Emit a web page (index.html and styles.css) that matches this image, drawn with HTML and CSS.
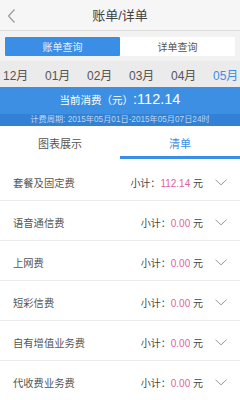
FILE: index.html
```html
<!DOCTYPE html>
<html lang="zh">
<head>
<meta charset="utf-8">
<link rel="stylesheet" href="styles.css">
</head>
<body>
<div class="app">
  <header class="topbar">
    <svg class="back" width="9" height="14" viewBox="0 0 9 14"><polyline points="7.5,0.5 1.5,7 7.5,13.5" fill="none" stroke="#9a9a9a" stroke-width="1.2"/></svg>
    <div class="title">账单/详单</div>
  </header>
  <div class="seg-wrap">
    <div class="seg">
      <div class="seg-item active">账单查询</div>
      <div class="seg-item">详单查询</div>
    </div>
  </div>
  <div class="months">
    <span>12月</span><span>01月</span><span>02月</span><span>03月</span><span>04月</span><span class="cur">05月</span>
  </div>
  <div class="total"><span class="total-label">当前消费（元）</span><span class="total-num">:112.14</span></div>
  <div class="period">计费周期: 2015年05月01日-2015年05月07日24时</div>
  <div class="tabs">
    <div class="tab">图表展示</div>
    <div class="tab active">清单</div>
  </div>
  <div class="list">
    <div class="row"><span class="label">套餐及固定费</span><span class="sub">小计：<em>112.14</em> 元</span><svg class="chev" width="12" height="7" viewBox="0 0 12 7"><polyline points="0.5,0.8 6,5.8 11.5,0.8" fill="none" stroke="#9a9a9a" stroke-width="1"/></svg></div>
    <div class="row"><span class="label">语音通信费</span><span class="sub">小计：<em>0.00</em> 元</span><svg class="chev" width="12" height="7" viewBox="0 0 12 7"><polyline points="0.5,0.8 6,5.8 11.5,0.8" fill="none" stroke="#9a9a9a" stroke-width="1"/></svg></div>
    <div class="row"><span class="label">上网费</span><span class="sub">小计：<em>0.00</em> 元</span><svg class="chev" width="12" height="7" viewBox="0 0 12 7"><polyline points="0.5,0.8 6,5.8 11.5,0.8" fill="none" stroke="#9a9a9a" stroke-width="1"/></svg></div>
    <div class="row"><span class="label">短彩信费</span><span class="sub">小计：<em>0.00</em> 元</span><svg class="chev" width="12" height="7" viewBox="0 0 12 7"><polyline points="0.5,0.8 6,5.8 11.5,0.8" fill="none" stroke="#9a9a9a" stroke-width="1"/></svg></div>
    <div class="row"><span class="label">自有增值业务费</span><span class="sub">小计：<em>0.00</em> 元</span><svg class="chev" width="12" height="7" viewBox="0 0 12 7"><polyline points="0.5,0.8 6,5.8 11.5,0.8" fill="none" stroke="#9a9a9a" stroke-width="1"/></svg></div>
    <div class="row"><span class="label">代收费业务费</span><span class="sub">小计：<em>0.00</em> 元</span><svg class="chev" width="12" height="7" viewBox="0 0 12 7"><polyline points="0.5,0.8 6,5.8 11.5,0.8" fill="none" stroke="#9a9a9a" stroke-width="1"/></svg></div>
  </div>
</div>
</body>
</html>
```
FILE: styles.css
```css
* { box-sizing: border-box; margin: 0; padding: 0; }
html, body { width: 240px; height: 400px; overflow: hidden; background: #fff; }
body { font-family: "Liberation Sans", "Noto Sans CJK SC", sans-serif; color: #555; }
.app { width: 240px; }

.topbar {
  height: 31px;
  background: #f6f6f6;
  border-bottom: 1px solid #dcdcdc;
  display: flex;
  align-items: center;
  justify-content: center;
  position: relative;
}
.back { position: absolute; left: 7px; top: 9px; }
.title { font-size: 13px; color: #444; line-height: 1; margin-top: 1px; }

.seg-wrap { background: #f2f2f2; padding: 6px 5px 5px; }
.seg { display: flex; height: 19px; background: #fff; }
.seg-item {
  flex: 1;
  display: flex; align-items: center; justify-content: center;
  font-size: 10px; color: #555;
}
.seg-item.active { background: #3a8ee6; color: #e8f1fc; border-radius: 1px; }

.months {
  height: 26px;
  background: #ebebeb;
  display: flex;
  align-items: center;
  gap: 17px;
  padding-left: 3px;
  font-size: 12px;
  color: #555;
}
.months span { width: 25px; white-space: nowrap; }
.months .cur { color: #3d8fe3; }

.total {
  height: 27px;
  background: #3d8fe3;
  color: #fff;
  display: flex; align-items: center; justify-content: center;
  padding-bottom: 3px;
}
.total-label { font-size: 10.5px; }
.total-num { font-size: 14.5px; }

.period {
  height: 12px;
  background: #3281d4;
  color: #bcd6f2;
  font-size: 8.2px;
  line-height: 12px;
  text-align: center;
  white-space: nowrap;
}

.tabs { display: flex; height: 33px; }
.tab {
  flex: 1;
  display: flex; align-items: center; justify-content: center;
  font-size: 11px; color: #555;
  border-bottom: 3px solid transparent;
  padding-top: 3px;
}
.tab.active { color: #3d8fe3; border-bottom-color: #3a8ee6; }

.list { padding-top: 2px; }
.row {
  height: 40px;
  border-bottom: 1px solid #ececec;
  display: flex; align-items: center;
  padding: 3px 13px 0 13px;
}
.label { flex: 1; font-size: 10.3px; color: #555; }
.sub { font-size: 10px; color: #444; white-space: nowrap; }
.sub em { font-style: normal; color: #e2639d; }
.chev { margin-left: 12px; margin-top: 1px; }
```
